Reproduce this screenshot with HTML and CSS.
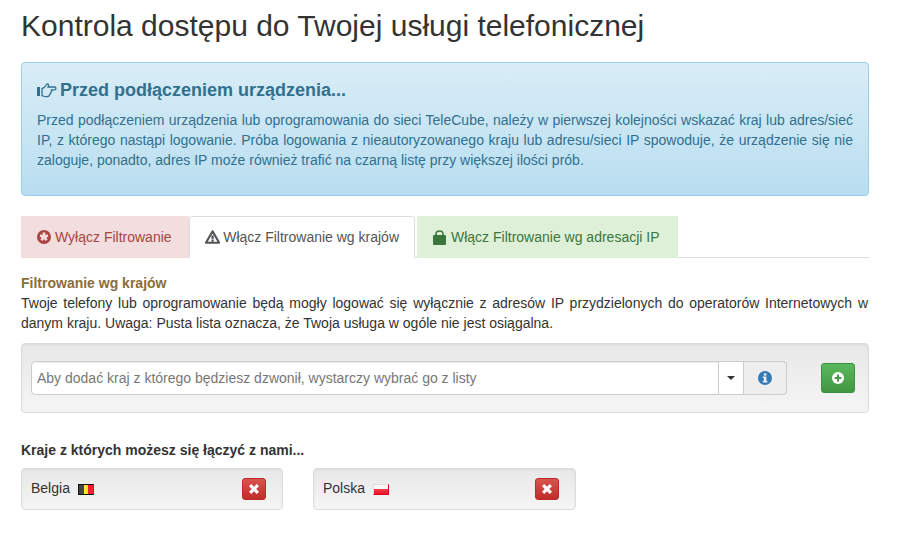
FILE: index.html
```html
<!DOCTYPE html>
<html lang="en">

<head>
    <meta charset="UTF-8">
    <meta name="viewport" content="width=device-width, initial-scale=1.0">
    <title>Kontrola dostępu</title>
    <link rel="stylesheet" href="styles.css">
</head>

<body>
    <h1 class="page-title">Kontrola dostępu do Twojej usługi telefonicznej</h1>

    <div class="alert-info">
        <h4>
            <svg class="icon-hand" width="20" height="15" viewBox="0 0 20 15">
                <rect x="0" y="4" width="3" height="9" fill="#31708f"/>
                <path d="M5 5.5 C7 5 8.5 3.5 9.5 1.5 C10.3 0.4 11.9 1 11.5 2.6 L11 4 H17.5 C19.4 4 19.4 6.8 17.5 6.8 H14.5 C15 7.7 14.6 8.8 13.8 9.2 C14 10.2 13.4 11 12.6 11.3 C12.7 12.8 11.6 13.6 10.2 13.6 H8.5 C7 13.6 6 12.8 5 12.6 Z" fill="none" stroke="#31708f" stroke-width="1.3"/>
            </svg>
            Przed podłączeniem urządzenia...
        </h4>
        <p>Przed podłączeniem urządzenia lub oprogramowania do sieci TeleCube, należy w pierwszej kolejności wskazać kraj lub adres/sieć IP, z którego nastąpi logowanie. Próba logowania z nieautoryzowanego kraju lub adresu/sieci IP spowoduje, że urządzenie się nie zaloguje, ponadto, adres IP może również trafić na czarną listę przy większej ilości prób.</p>
    </div>

    <ul class="tabs">
        <li class="tab tab-red">
            <svg class="tab-icon" width="14" height="14" viewBox="0 0 14 14">
                <circle cx="7" cy="7" r="7" fill="#a94442"/>
                <path d="M5.6 2.6 H8.4 V4.9 L10.6 4.2 L11.4 6.8 L9.3 7.5 L10.6 9.4 L8.4 11 L7 9.1 L5.6 11 L3.4 9.4 L4.7 7.5 L2.6 6.8 L3.4 4.2 L5.6 4.9 Z" fill="#f2dede"/>
            </svg>
            Wyłącz Filtrowanie
        </li>
        <li class="tab tab-active">
            <svg class="tab-icon" width="16" height="14" viewBox="0 0 16 14">
                <path d="M6.9 0.6 C7.4 -0.2 8.6 -0.2 9.1 0.6 L15.8 12.4 C16.3 13.2 15.7 14 14.9 14 H1.1 C0.3 14 -0.3 13.2 0.2 12.4 Z M8 3.4 L2.9 12 H13.1 Z" fill="#555" fill-rule="evenodd"/>
                <rect x="6.8" y="5.4" width="2.4" height="3.6" fill="#555"/>
                <rect x="6.8" y="9.6" width="2.4" height="2.4" fill="#555"/>
            </svg>
            Włącz Filtrowanie wg krajów
        </li>
        <li class="tab tab-green">
            <svg class="tab-icon" width="13" height="15" viewBox="0 0 13 15">
                <path d="M3 6 V4 C3 0 10 0 10 4 V6" fill="none" stroke="#3c763d" stroke-width="1.6"/>
                <rect x="0" y="5" width="13" height="10" rx="1.2" fill="#3c763d"/>
            </svg>
            Włącz Filtrowanie wg adresacji IP
        </li>
    </ul>

    <div class="filter-info">
        <strong>Filtrowanie wg krajów</strong>
        <p>Twoje telefony lub oprogramowanie będą mogły logować się wyłącznie z adresów IP przydzielonych do operatorów Internetowych w danym kraju. Uwaga: Pusta lista oznacza, że Twoja usługa w ogóle nie jest osiągalna.</p>
    </div>

    <div class="well add-box">
        <div class="input-group">
            <input class="country-input" type="text" placeholder="Aby dodać kraj z którego będziesz dzwonił, wystarczy wybrać go z listy">
            <span class="caret-box"><span class="caret"></span></span>
            <span class="info-box">
                <svg width="14" height="14" viewBox="0 0 14 14">
                    <circle cx="7" cy="7" r="7" fill="#337ab7"/>
                    <rect x="5.8" y="2.4" width="2.6" height="2.2" fill="#eee"/>
                    <path d="M4.8 5.6 H8.4 V10 H9.4 V11.4 H4.8 V10 H5.8 V7 H4.8 Z" fill="#eee"/>
                </svg>
            </span>
        </div>
        <button class="btn btn-add">
            <svg width="12" height="12" viewBox="0 0 12 12">
                <circle cx="6" cy="6" r="6" fill="#fff"/>
                <path d="M5 2.6 H7 V5 H9.4 V7 H7 V9.4 H5 V7 H2.6 V5 H5 Z" fill="#449d44"/>
            </svg>
        </button>
    </div>

    <h5 class="list-title">Kraje z których możesz się łączyć z nami...</h5>

    <div class="country-list">
        <div class="well country">
            <span class="country-name">Belgia</span>
            <span class="flag flag-be"></span>
            <button class="btn btn-remove">
                <svg width="12" height="12" viewBox="0 0 12 12"><path d="M1 3.2 L3.2 1 L6 3.8 L8.8 1 L11 3.2 L8.2 6 L11 8.8 L8.8 11 L6 8.2 L3.2 11 L1 8.8 L3.8 6 Z" fill="#fff"/></svg>
            </button>
        </div>
        <div class="well country">
            <span class="country-name">Polska</span>
            <span class="flag flag-pl"></span>
            <button class="btn btn-remove">
                <svg width="12" height="12" viewBox="0 0 12 12"><path d="M1 3.2 L3.2 1 L6 3.8 L8.8 1 L11 3.2 L8.2 6 L11 8.8 L8.8 11 L6 8.2 L3.2 11 L1 8.8 L3.8 6 Z" fill="#fff"/></svg>
            </button>
        </div>
    </div>
</body>

</html>
```

FILE: styles.css
```css
* {
    margin: 0;
    padding: 0;
    box-sizing: border-box;
}

html, body {
    height: 536px;
    overflow: hidden;
}

body {
    background-color: #fff;
    color: #333;
    font-family: "Liberation Sans", Arial, sans-serif;
    font-size: 14px;
    line-height: 20px;
    padding: 0 41px 0 21px;
}

.page-title {
    font-size: 30px;
    font-weight: 400;
    line-height: 33px;
    padding-top: 9px;
    margin-bottom: 20px;
}

.alert-info {
    height: 134px;
    padding: 17px 15px 15px;
    color: #31708f;
    background-image: linear-gradient(to bottom, #d9edf7, #b9def0);
    border: 1px solid #9acfea;
    border-radius: 4px;
    margin-bottom: 20px;
}

.alert-info h4 {
    display: flex;
    align-items: center;
    gap: 3px;
    font-size: 18px;
    line-height: 20px;
    margin-bottom: 10px;
}

.alert-info p {
    text-align: justify;
}

.tabs {
    display: flex;
    list-style: none;
    height: 42px;
    border-bottom: 1px solid #ddd;
    margin-bottom: 15px;
}

.tab {
    display: flex;
    align-items: center;
    gap: 4px;
    height: 42px;
    padding: 0 15px 0 16px;
    white-space: nowrap;
}

.tab-red {
    color: #a94442;
    background-color: #f2dede;
    width: 168px;
}

.tab-active {
    color: #555;
    background-color: #fff;
    border: 1px solid #ddd;
    border-bottom-color: #fff;
    border-radius: 4px 4px 0 0;
    width: 226px;
    margin-right: 2px;
    padding-left: 15px;
    gap: 3px;
}

.tab-green {
    color: #3c763d;
    background-color: #dff0d8;
    width: 261px;
    gap: 5px;
}

.filter-info {
    width: 847px;
    margin-bottom: 10px;
}

.filter-info strong {
    color: #8a6d3b;
}

.filter-info p {
    text-align: justify;
}

.well {
    background-image: linear-gradient(to bottom, #e8e8e8, #f5f5f5);
    border: 1px solid #dcdcdc;
    border-radius: 4px;
    box-shadow: inset 0 1px 3px rgba(0, 0, 0, 0.05);
}

.add-box {
    display: flex;
    align-items: center;
    justify-content: space-between;
    height: 70px;
    padding: 0 13px 0 9px;
    margin-bottom: 29px;
}

.input-group {
    display: flex;
    width: 756px;
    height: 34px;
}

.country-input {
    flex: 1;
    min-width: 0;
    padding: 0 5px;
    font: inherit;
    color: #555;
    background-color: #fff;
    border: 1px solid #ccc;
    border-radius: 4px 0 0 4px;
    box-shadow: inset 0 1px 1px rgba(0, 0, 0, 0.075);
}

.country-input::placeholder {
    color: #777;
    opacity: 1;
}

.caret-box {
    display: flex;
    align-items: center;
    justify-content: center;
    width: 25px;
    background-color: #fff;
    border: 1px solid #ccc;
    border-left: none;
}

.caret {
    border-top: 4px solid #333;
    border-left: 4px solid transparent;
    border-right: 4px solid transparent;
}

.info-box {
    display: flex;
    align-items: center;
    justify-content: center;
    width: 43px;
    background-color: #eee;
    border: 1px solid #ccc;
    border-left: none;
    border-radius: 0 4px 4px 0;
}

.btn {
    display: flex;
    align-items: center;
    justify-content: center;
    border-radius: 3px;
}

.btn-add {
    width: 34px;
    height: 30px;
    background-image: linear-gradient(to bottom, #5cb85c, #419641);
    border: 1px solid #3e8f3e;
}

.list-title {
    font-size: 14px;
    line-height: 16px;
    font-weight: bold;
    margin-bottom: 10px;
}

.country-list {
    display: flex;
    gap: 30px;
}

.country {
    display: flex;
    align-items: center;
    width: 262px;
    height: 42px;
    padding: 0 16px 0 9px;
}

.country + .country {
    width: 263px;
}

.country-name {
    margin-right: 8px;
    position: relative;
    top: -1px;
}

.flag {
    display: block;
    width: 16px;
    height: 11px;
    border: 1px solid;
}

.flag-be {
    border-color: #111 #e01020 #111 #111;
    background-image: linear-gradient(to right, #444 33%, #fff030 33%, #f6dc20 66%, #f02030 66%);
}

.flag-pl {
    border-color: #ddd #d80020 #d80020 #ddd;
    background-image: linear-gradient(to bottom, #f8f8f8 45%, #f04050 45%, #f01028);
}

.btn-remove {
    width: 24px;
    height: 22px;
    margin-left: auto;
    background-image: linear-gradient(to bottom, #d9534f, #c12e2a);
    border: 1px solid #b92c28;
}
```
